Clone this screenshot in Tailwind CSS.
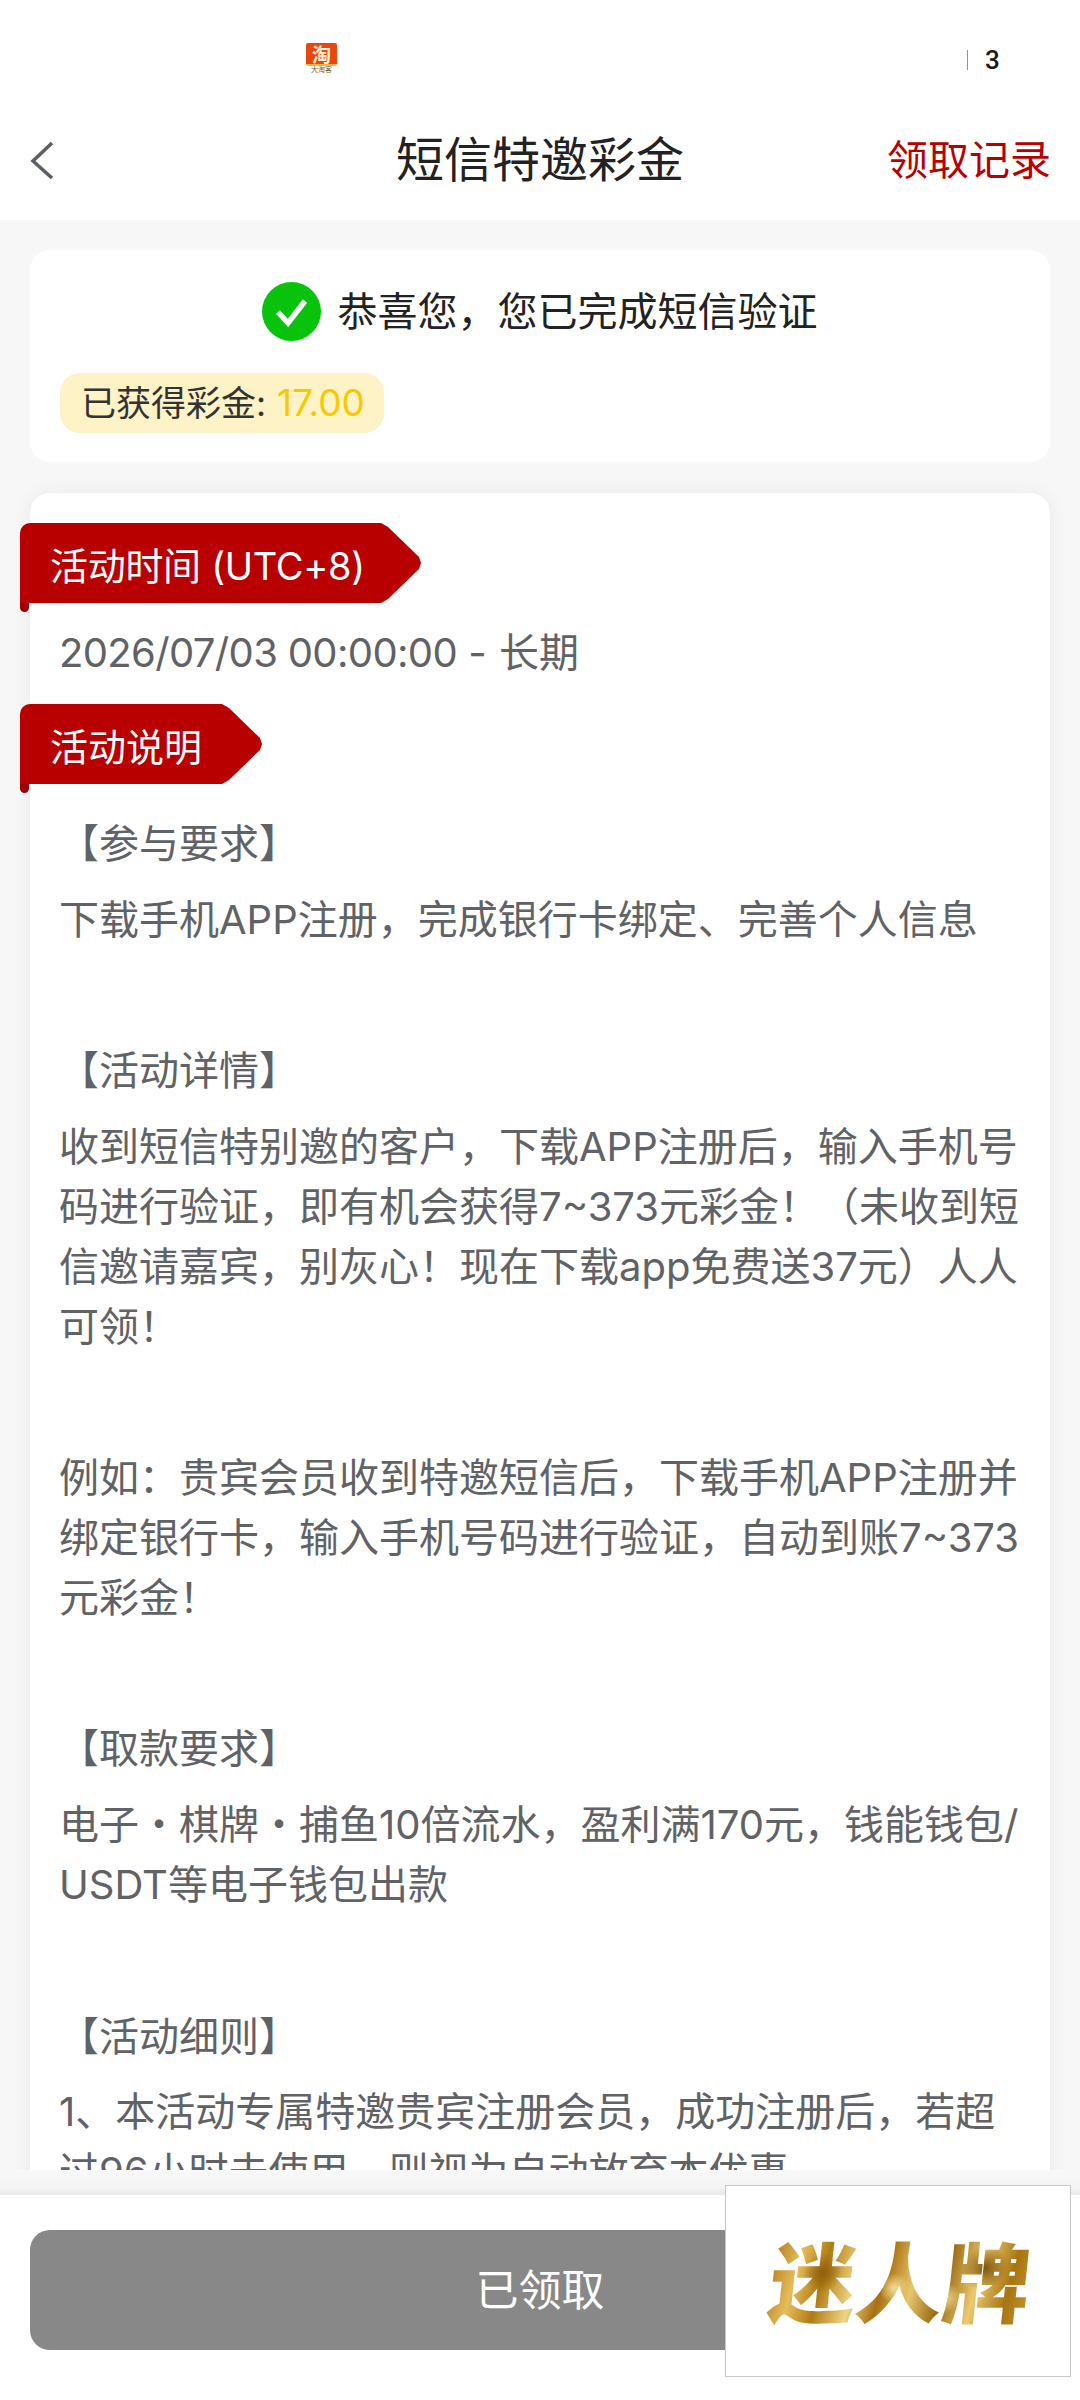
<!DOCTYPE html>
<html lang="zh-CN">
<head>
<meta charset="utf-8">
<script src="https://cdn.jsdelivr.net/npm/@tailwindcss/browser@4"></script>
</head>
<body class="m-0">
<div class="relative w-[1080px] h-[2400px] overflow-hidden flex flex-col bg-[#f7f7f7] font-['Inter','Noto_Sans_CJK_SC',sans-serif] text-[40px] leading-[60px] text-[#606266]">

  <div class="h-[96px] bg-white shrink-0 relative flex items-start">
    <div class="ml-[306px] mt-[43px] w-[31px] h-[29px] flex flex-col items-center">
      <div class="w-[31px] h-[23px] rounded-[2px] bg-[#e8470f] border-b-2 border-[#f9b53a] flex items-center justify-center text-[#fff3dc] text-[19px] leading-[21px] font-bold font-['Noto_Sans_CJK_SC',sans-serif]">淘</div>
      <div class="text-[7px] leading-[6px] text-[#7a5a30] whitespace-nowrap font-['Noto_Sans_CJK_SC',sans-serif]">大淘客</div>
    </div>
    <div class="ml-[630px] mt-[50px] w-px h-[20px] bg-[#e8756b]"></div>
    <div class="ml-[17px] mt-[45px] text-[26px] leading-[30px] font-medium text-[#1a1a1a] font-['Roboto',sans-serif]">3</div>
  </div>

  <div class="h-[124px] bg-white shrink-0 relative flex items-center justify-center">
    <svg class="absolute left-[28px] top-[45px]" width="28" height="38" viewBox="0 0 28 38" fill="none"><path d="M24 2 L5 20 L24 37" stroke="#5b5e66" stroke-width="3.5"/></svg>
    <div class="mt-[3px] text-[48px] leading-[60px] text-[#222]">短信特邀彩金</div>
    <div class="absolute right-[29px] top-[34px] text-[41px] leading-[60px] text-[#b80000]">领取记录</div>
  </div>

  <div class="flex-1 min-h-0 overflow-hidden px-[30px] pt-[30px]">
    <div class="bg-white rounded-[20px] h-[212px] pt-[32px] px-[30px]">
      <div class="flex items-center justify-center h-[59px] gap-[17px] pr-[1px]">
        <svg width="59" height="59" viewBox="0 0 59 59"><circle cx="29.5" cy="29.5" r="29.5" fill="#07c30b"/><path d="M16 30 L26 41 L43 19" fill="none" stroke="#fff" stroke-width="5.5"/></svg>
        <div class="text-[40px] leading-[59px] text-[#222]">恭喜您，您已完成短信验证</div>
      </div>
      <div class="mt-[32px] inline-flex items-center h-[60px] rounded-[20px] bg-[#fdf3c7] pl-[21px] pr-[19px] text-[35px] text-[#333] whitespace-nowrap">已获得彩金:<span class="ml-[11px] text-[37px] text-[#f9c900]">17.00</span></div>
    </div>

    <div class="mt-[31px] bg-white rounded-t-[20px] shadow-[0_0_20px_rgba(0,0,0,0.06)] pt-[30px] h-[1700px]">
      <div class="relative -ml-[10px] w-[401px] h-[80px]">
        <div class="absolute left-0 top-[70px] w-[9px] h-[19px] rounded-b-[6px] bg-[#9c0000]"></div>
        <div class="absolute inset-0 rounded-tl-[10px] bg-[#b80000] [clip-path:polygon(0_0,361px_0,368px_4px,399px_34px,401px_40px,399px_46px,368px_76px,361px_80px,0_80px)] pl-[30px] pt-[3px] text-white text-[38px] leading-[80px] tracking-[-0.3px] whitespace-nowrap">活动时间 (UTC+8)</div>
      </div>
      <div class="mt-[20px] pl-[29px] text-[40px] leading-[60px]"><span class="tracking-[-0.65px]">2026/07/03 00:00:00</span> - <span class="ml-[1px]">长期</span></div>
      <div class="relative -ml-[10px] mt-[21px] w-[242px] h-[80px]">
        <div class="absolute left-0 top-[70px] w-[9px] h-[19px] rounded-b-[6px] bg-[#9c0000]"></div>
        <div class="absolute inset-0 rounded-tl-[10px] bg-[#b80000] [clip-path:polygon(0_0,202px_0,209px_4px,240px_34px,242px_40px,240px_46px,209px_76px,202px_80px,0_80px)] pl-[30px] pt-[3px] text-white text-[38px] leading-[80px] whitespace-nowrap">活动说明</div>
      </div>
      <div class="mt-[30px] pl-[29px] pr-[30px] whitespace-nowrap leading-[59.8px]">
        <p class="mb-[16px]">【参与要求】</p>
        <p class="mb-[16px]">下载手机APP注册，完成银行卡绑定、完善个人信息</p>
        <p class="mb-[16px]">&nbsp;</p>
        <p class="mb-[16px]">【活动详情】</p>
        <p class="mb-[16px]">收到短信特别邀的客户，下载APP注册后，输入手机号<br>码进行验证，即有机会获得7~373元彩金！（未收到短<br>信邀请嘉宾，别灰心！现在下载app免费送37元）人人<br>可领！</p>
        <p class="mb-[16px]">&nbsp;</p>
        <p class="mb-[16px]">例如：贵宾会员收到特邀短信后，下载手机APP注册并<br>绑定银行卡，输入手机号码进行验证，自动到账7~373<br>元彩金！</p>
        <p class="mb-[16px]">&nbsp;</p>
        <p class="mb-[16px]">【取款要求】</p>
        <p class="mb-[16px]">电子・棋牌・捕鱼10倍流水，盈利满170元，钱能钱包/<br>USDT等电子钱包出款</p>
        <p class="mb-[16px]">&nbsp;</p>
        <p class="mb-[16px]">【活动细则】</p>
        <p class="mb-[16px]">1、本活动专属特邀贵宾注册会员，成功注册后，若超<br>过96小时未使用，则视为自动放弃本优惠</p>
      </div>
    </div>
  </div>

  <div class="h-[230px] shrink-0 flex flex-col">
    <div class="h-[25px] bg-[linear-gradient(to_bottom,#f8f8f8,#f4f4f4_70%,#e9e9e9)]"></div>
    <div class="flex-1 bg-white px-[30px] pt-[35px]">
      <div class="h-[120px] rounded-[20px] bg-[#888888] flex items-center justify-center text-white text-[43px]">已领取</div>
    </div>
  </div>

  <div class="absolute left-[725px] top-[2185px] w-[346px] h-[192px] bg-white border border-[#c8c8c8] flex items-center justify-center">
    <div class="-skew-x-[6deg] mt-[-6px] ml-[4px] text-[87px] leading-[100px] font-black whitespace-nowrap font-['Noto_Sans_CJK_SC',sans-serif] bg-[radial-gradient(circle_at_20%_45%,#8f5f0c_0,transparent_9%),radial-gradient(circle_at_48%_60%,#f3dc96_0,transparent_10%),radial-gradient(circle_at_82%_40%,#7c5208_0,transparent_10%),radial-gradient(circle_at_68%_70%,#f1d88e_0,transparent_8%),linear-gradient(100deg,#a87412,#e6bd5c_12%,#b07c14_22%,#f0d483_34%,#a86f10_44%,#e8c66c_55%,#9a6a12_66%,#ecc970_78%,#a87412_90%,#c8962c)] bg-clip-text text-transparent">迷人牌</div>
  </div>
</div>
</body>
</html>
